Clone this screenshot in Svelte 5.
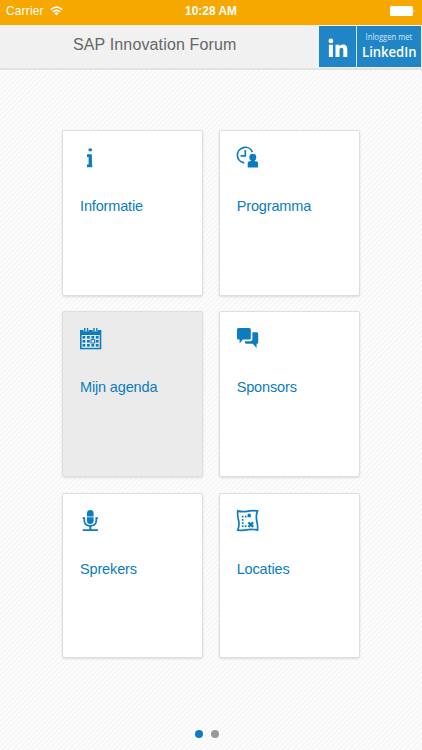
<script>
  let selected = $state('agenda');
  let page = $state(0);

  const tiles = [
    { id: 'info', label: 'Informatie' },
    { id: 'program', label: 'Programma' },
    { id: 'agenda', label: 'Mijn agenda' },
    { id: 'sponsors', label: 'Sponsors' },
    { id: 'speakers', label: 'Sprekers' },
    { id: 'locations', label: 'Locaties' },
  ];

  const calendarRows = [9, 13, 17];
  const calendarCols = [3.5, 8, 12.4, 16.8];
</script>

<div class="app">
  <div class="status-bar">
    <div class="carrier">
      <span>Carrier</span>
      <svg class="wifi" viewBox="0 0 13 10">
        <path d="M.8 3.7Q6.5 -1.4 12.2 3.7" />
        <path d="M2.8 6Q6.5 2.7 10.2 6" />
        <path class="solid" d="M4.3 7.2Q6.5 5.5 8.7 7.2L6.5 9.5Z" />
      </svg>
    </div>
    <span class="time">10:28 AM</span>
    <div class="power">
      <svg class="battery" viewBox="0 0 26 10">
        <rect x="0" y="0" width="23" height="10" rx="1.5" />
        <path d="M23.8 3.2Q25.2 5 23.8 6.8Z" />
      </svg>
    </div>
  </div>

  <header>
    <h1>SAP Innovation Forum</h1>
    <button class="linkedin">
      <span class="in-box">
        <svg viewBox="0 0 20 20">
          <circle cx="2.9" cy="2.9" r="2.4" />
          <path d="M.9 6.7H4.9V19H.9Z" />
          <path d="M7.5 6.7H11.3V8.4C12 7.2 13.3 6.4 15 6.4C18.6 6.4 19.3 8.8 19.3 12V19H15.3V12.8C15.3 11.2 15.1 9.8 13.5 9.8C11.8 9.8 11.5 11.2 11.5 12.8V19H7.5Z" />
        </svg>
      </span>
      <span class="in-text">
        <small>Inloggen met</small>
        <strong>LinkedIn</strong>
      </span>
    </button>
  </header>

  <main>
    <div class="tiles">
      {#each tiles as tile}
        <button class="tile" class:selected={selected === tile.id} onclick={() => (selected = tile.id)}>
          <svg class="icon" viewBox="0 0 24 24">
            {#if tile.id === 'info'}
              <path d="M9.6 2.6H12.9V5.2H9.6ZM8 8.2H12.9V18.6H13.2V21.3H8V18.6H9.6V10.9H8Z" />
            {:else if tile.id === 'program'}
              <path class="line" d="M8.3 16.9A7.8 7.8 0 1 1 16.4 6.1" />
              <path class="line" d="M9.3 3.9V9.9H4.6" />
              <circle cx="16.8" cy="11.2" r="3.5" />
              <path d="M14.8 13H18.8V15.3H20.3Q22 15.3 22 17V21.4H11.7V17Q11.7 15.3 13.4 15.3H14.8Z" />
            {:else if tile.id === 'agenda'}
              <path d="M1 3H22.3V22.3H1Z" />
              <path class="cut" d="M2.6 8H20.7V20.8H2.6Z" />
              <path class="cut" d="M4.4 2.5H9.6V4.4H4.4ZM13.7 2.5H18.9V4.4H13.7Z" />
              <path d="M5 1H6.4V4.8H5ZM7.8 1H9.2V4.8H7.8ZM14.3 1H15.7V4.8H14.3ZM17.1 1H18.5V4.8H17.1Z" />
              {#each calendarRows as y}
                {#each calendarCols as x}
                  <rect {x} {y} width="2.8" height="2.6" />
                {/each}
              {/each}
              <rect class="day" x="12" y="12.6" width="3.6" height="3.4" />
            {:else if tile.id === 'sponsors'}
              <path d="M2.4 1H13.3Q14.8 1 14.8 2.5V11Q14.8 12.5 13.3 12.5H6.8L3.6 16.6V12.5H2.4Q1 12.5 1 11V2.5Q1 1 2.4 1Z" />
              <path d="M16.4 5.2H20.9Q22.2 5.2 22.2 6.7V15.4Q22.2 16.8 20.9 16.8H20.6V21L16.7 16.8H10.4Q9 16.8 9 15.4V14.2H14.3Q16.4 14.2 16.4 12.2Z" />
            {:else if tile.id === 'speakers'}
              <path d="M8 7.4V4.4Q8 1 11.3 1Q14.6 1 14.6 4.4V7.4Z" />
              <path d="M8 8.3H14.6V11.8Q14.6 15 11.3 15Q8 15 8 11.8Z" />
              <path class="line" d="M3.7 9.1H5.3V11.5Q5.3 16.8 11.3 16.8Q17.3 16.8 17.3 11.5V9.1H18.9" />
              <path d="M10.3 17H12.3V20.2H18.9V21.9H3.7V20.2H10.3Z" />
            {:else}
              <path class="line" d="M1.8 1.9Q6.5 3.3 11 2.3T21.5 1.9Q19.6 7 20.8 12T21.5 21.1Q16.5 19.8 12 20.7T1.8 21.1Q3.7 16 2.5 11T1.8 1.9Z" />
              <path d="M11.5 8.3V6Q11.5 4.4 13.2 4.4Q14.9 4.4 14.9 6V8.3Z" />
              <path d="M5.8 6.8H7.5V8.5H5.8ZM8.8 6.8H10.5V8.5H8.8ZM5.8 10H7.5V11.7H5.8ZM5.8 13.2H7.5V14.9H5.8ZM5.8 16.3H7.5V18H5.8ZM8.8 16.3H10.5V18H8.8Z" />
              <path class="cross" d="M12.4 13.3L17.2 17.8M17.2 13.3L12.4 17.8" />
            {/if}
          </svg>
          <span class="label">{tile.label}</span>
        </button>
      {/each}
    </div>
  </main>

  <nav>
    {#each [0, 1] as i}
      <button class="dot" class:active={page === i} aria-label="Pagina {i + 1}" onclick={() => (page = i)}></button>
    {/each}
  </nav>
</div>

<style>
  :global(body) {
    margin: 0;
  }

  .app {
    width: 422px;
    height: 750px;
    display: flex;
    flex-direction: column;
    overflow: hidden;
    font-family: 'Liberation Sans', Arial, sans-serif;
    background: repeating-linear-gradient(135deg, #fcfcfc 0, #fcfcfc 1.6px, #f6f6f6 2.1px, #f6f6f6 3.1px, #fcfcfc 3.6px);
  }

  button {
    border: none;
    padding: 0;
    font-family: inherit;
    cursor: pointer;
  }

  .status-bar {
    flex: none;
    height: 25px;
    box-sizing: border-box;
    padding: 0 6px 3px 6px;
    display: grid;
    grid-template-columns: 1fr auto 1fr;
    align-items: center;
    background: #f6a800;
    color: #fff;
    font-size: 11.9px;
  }

  .carrier {
    display: flex;
    align-items: center;
    gap: 6px;
    letter-spacing: 0.2px;
  }

  .wifi {
    width: 13px;
    height: 10px;
    fill: none;
    stroke: #fff;
    stroke-width: 1.6;
  }

  .wifi .solid {
    fill: #fff;
    stroke: none;
  }

  .time {
    font-weight: bold;
  }

  .power {
    display: flex;
    justify-content: flex-end;
  }

  .battery {
    width: 26px;
    height: 10px;
    fill: #fff;
  }

  header {
    flex: none;
    height: 45px;
    box-sizing: border-box;
    border-bottom: 2px solid #e2e2e2;
    display: flex;
    justify-content: space-between;
    background: #f1f1f1;
  }

  h1 {
    margin: 0;
    padding-left: 73px;
    font-size: 16px;
    font-weight: normal;
    letter-spacing: 0.14px;
    line-height: 39px;
    color: #666;
    white-space: nowrap;
  }

  .linkedin {
    display: flex;
    gap: 1px;
    width: 102px;
    height: 41px;
    margin: 1px 1px 0 0;
    background: #d5e6f3;
    color: #fff;
  }

  .in-box {
    width: 37px;
    height: 41px;
    background: #1f85c7;
  }

  .in-box svg {
    display: block;
    width: 20px;
    height: 20px;
    margin: 12px 0 0 9px;
    fill: #fff;
  }

  .in-text {
    flex: 1;
    height: 41px;
    display: flex;
    flex-direction: column;
    align-items: center;
    background: #1f85c7;
    font-family: 'Open Sans', 'Noto Sans', sans-serif;
    white-space: nowrap;
  }

  .in-text small {
    margin-top: 4px;
    font-size: 8.5px;
    line-height: 13px;
    color: #d5e9f7;
    transform: scaleX(0.9);
  }

  .in-text strong {
    font-size: 15px;
    font-weight: 600;
    line-height: 17px;
    transform: scaleX(0.87);
  }

  main {
    flex: 1;
    padding: 61px 62px 0 63px;
  }

  .tiles {
    display: grid;
    grid-template-columns: repeat(2, 139px);
    grid-auto-rows: 163.6px;
    gap: 17.7px;
  }

  .tile {
    box-sizing: border-box;
    display: flex;
    flex-direction: column;
    align-items: flex-start;
    padding: 15px 0 0 16px;
    background: #fff;
    border-radius: 1px;
    box-shadow: 0 0 0 1px #dedede, 0 1px 3px rgba(0, 0, 0, 0.25);
  }

  .tile.selected {
    background: #ebebeb;
  }

  .icon {
    flex: none;
    width: 24px;
    height: 24px;
    fill: #0c7cc0;
  }

  .line {
    fill: none;
    stroke: #0c7cc0;
    stroke-width: 1.7;
  }

  .cross {
    stroke: #0c7cc0;
    stroke-width: 2.3;
  }

  .cut {
    fill: #ebebeb;
  }

  .day {
    fill: #ebebeb;
    stroke: #0c7cc0;
    stroke-width: 1;
  }

  .label {
    margin: 27px 0 0 1px;
    font-size: 14.5px;
    letter-spacing: -0.15px;
    line-height: 18px;
    color: #0c7cc0;
  }

  nav {
    flex: none;
    height: 20px;
    display: flex;
    justify-content: center;
    gap: 8px;
    padding-right: 8px;
  }

  .dot {
    width: 8px;
    height: 8px;
    border-radius: 50%;
    background: #999;
  }

  .dot.active {
    background: #0c7cc0;
  }
</style>
